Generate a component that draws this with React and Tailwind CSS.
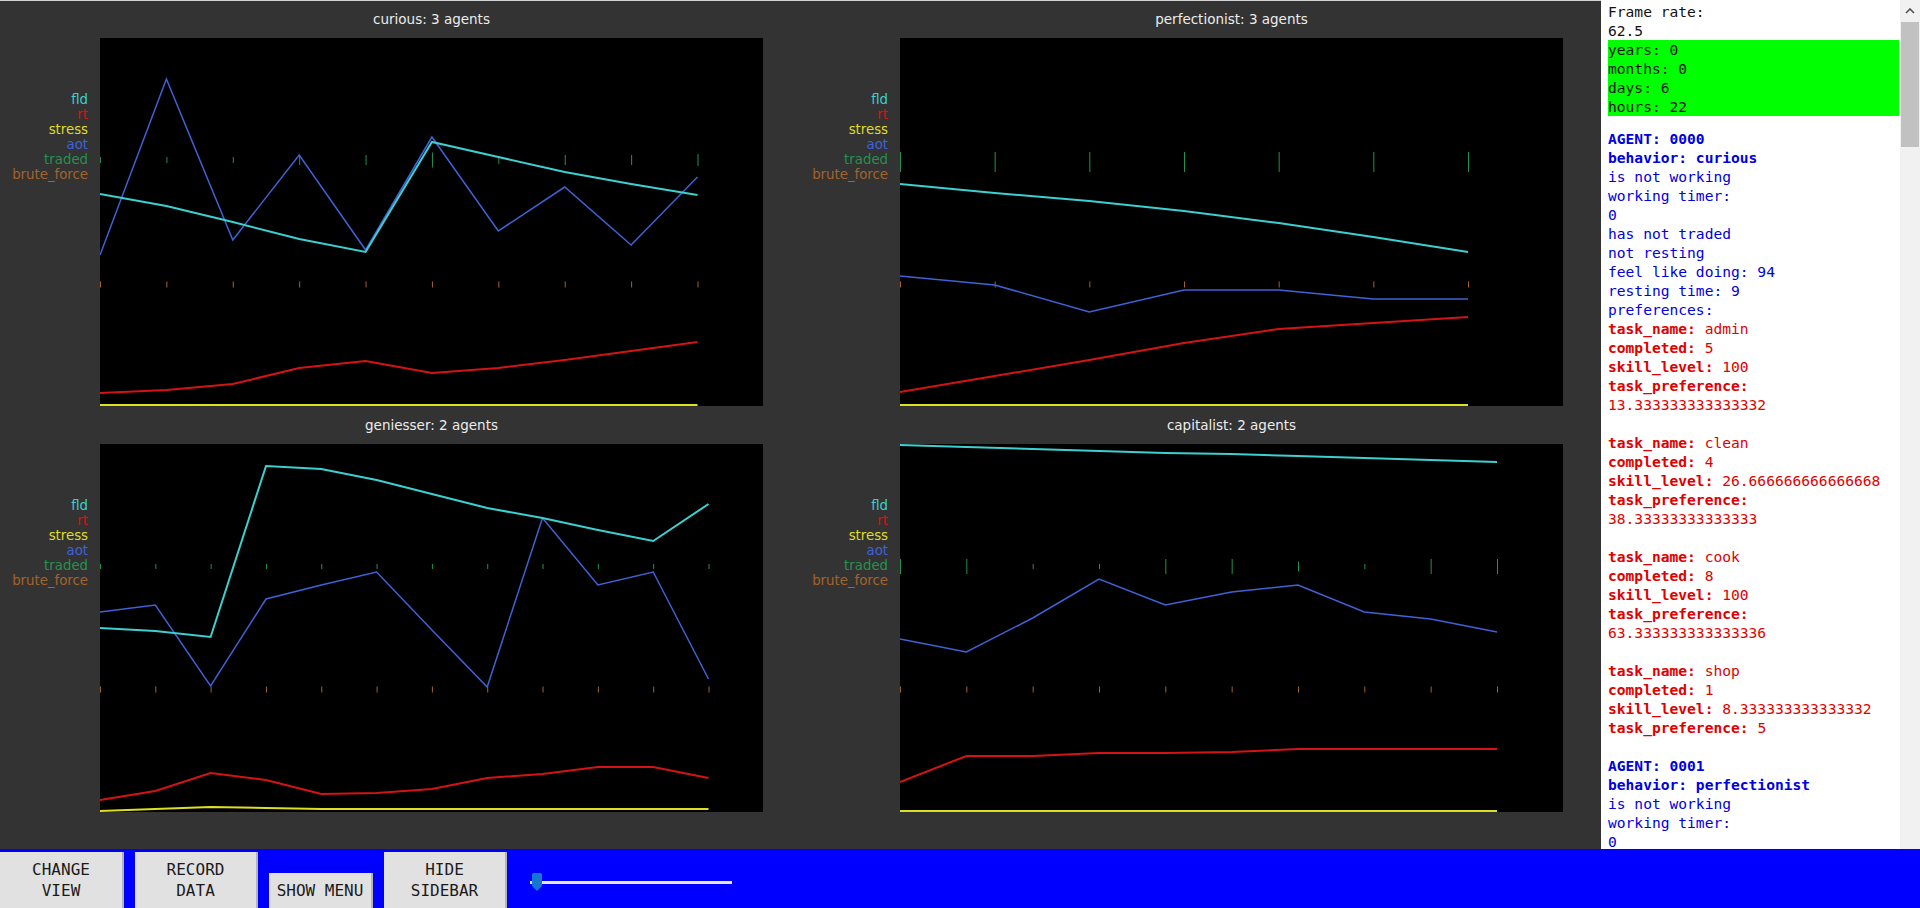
import React from "react";

const C = {
  fld: "#3cd0d0",
  rt: "#d41414",
  stress: "#dede24",
  aot: "#3f62d6",
  traded: "#24914f",
  brute: "#a3632c",
};

const charts = [
  {
    title: "curious: 3 agents",
    last: 597.5,
    fld: [156, 168, 184, 201, 214, 104, 119, 134, 146, 157],
    aot: [217, 41, 202, 117, 212, 99, 193, 149, 207, 139],
    rt: [355, 352, 346, 330, 323, 335, 330, 322, 313, 304],
    stress: [367, 367, 367, 367, 367, 367, 367, 367, 367, 367],
    traded: [6, 6, 6, 10, 10, 15, 8, 10, 10, 12],
    tc: 122,
    bc: 246.5,
  },
  {
    title: "perfectionist: 3 agents",
    last: 568,
    fld: [146, 155, 163, 173, 185, 199, 214],
    aot: [238, 247, 274, 252, 252, 261, 261],
    rt: [354, 338, 322, 305, 291, 285, 279],
    stress: [367, 367, 367, 367, 367, 367, 367],
    traded: [20, 20, 20, 20, 20, 20, 20],
    tc: 124,
    bc: 246.5,
  },
  {
    title: "geniesser: 2 agents",
    last: 608.5,
    fld: [184, 187, 193, 22, 25, 36, 50, 64, 74, 86, 97, 60],
    aot: [168, 161, 242, 155, 141, 128, 186, 243, 74, 141, 128, 235],
    rt: [356, 347, 329, 336, 350, 349, 345, 334, 330, 323, 323, 334],
    stress: [367, 365, 363, 364, 365, 365, 365, 365, 365, 365, 365, 365],
    traded: [5, 5, 5, 5, 5, 5, 5, 5, 5, 5, 5, 5],
    tc: 122.5,
    bc: 245.5,
  },
  {
    title: "capitalist: 2 agents",
    last: 597,
    fld: [1, 3, 5, 7, 9, 10, 12, 14, 16, 18],
    aot: [195, 208, 174, 135, 161, 148, 141, 168, 175, 188],
    rt: [338, 312, 312, 309, 309, 308, 305, 305, 305, 305],
    stress: [367, 367, 367, 367, 367, 367, 367, 367, 367, 367],
    traded: [15, 15, 5, 5, 15, 15, 10, 5, 15, 15],
    tc: 122.5,
    bc: 245.5,
  },
];

function pts(arr, dx) {
  return arr.map((y, i) => `${(i * dx).toFixed(1)},${y}`).join(" ");
}

function Panel({ c }) {
  const n = c.fld.length;
  const dx = c.last / (n - 1);
  const xs = c.fld.map((_, i) => i * dx + 0.5);
  return (
    <div className="flex flex-col">
      <div className="h-[38px] flex items-center pl-[100px]">
        <div className="w-[663px] text-center text-[13.5px] text-[#ececec] font-['DejaVu_Sans',sans-serif]">
          {c.title}
        </div>
      </div>
      <div className="flex">
        <div className="w-[100px] pr-[12px] pt-[54px] text-right text-[13.3px] leading-[15px] font-['DejaVu_Sans',sans-serif]">
          <div className="text-[#3cd0d0]">fld</div>
          <div className="text-[#d41414]">rt</div>
          <div className="text-[#dede24]">stress</div>
          <div className="text-[#3f62d6]">aot</div>
          <div className="text-[#24914f]">traded</div>
          <div className="text-[#a3632c]">brute_force</div>
        </div>
        <svg width="663" height="368" className="block bg-black">
          {xs.map((x, i) => (
            <line
              key={"t" + i}
              x1={x}
              x2={x}
              y1={c.tc - c.traded[i] / 2}
              y2={c.tc + c.traded[i] / 2}
              stroke={C.traded}
              strokeWidth="1"
            />
          ))}
          {xs.map((x, i) => (
            <line
              key={"b" + i}
              x1={x}
              x2={x}
              y1={c.bc - 3}
              y2={c.bc + 3}
              stroke={C.brute}
              strokeWidth="1"
            />
          ))}
          <polyline points={pts(c.stress, dx)} fill="none" stroke={C.stress} strokeWidth="2" />
          <polyline points={pts(c.rt, dx)} fill="none" stroke={C.rt} strokeWidth="2" />
          <polyline points={pts(c.aot, dx)} fill="none" stroke={C.aot} strokeWidth="1.5" />
          <polyline points={pts(c.fld, dx)} fill="none" stroke={C.fld} strokeWidth="2" />
        </svg>
      </div>
    </div>
  );
}

function KV({ k, v }) {
  return (
    <div>
      <span className="font-bold">{k}</span>
      {v !== undefined ? " " + v : ""}
    </div>
  );
}

function Task({ name, completed, skill, pref, prefInline }) {
  return (
    <div className="text-[#e00000]">
      <KV k="task_name:" v={name} />
      <KV k="completed:" v={completed} />
      <KV k="skill_level:" v={skill} />
      {prefInline ? (
        <KV k="task_preference:" v={pref} />
      ) : (
        <>
          <KV k="task_preference:" />
          <div>{pref}</div>
        </>
      )}
      <div>&nbsp;</div>
    </div>
  );
}

function Sidebar() {
  return (
    <div className="flex-1 flex bg-white">
      <div className="w-[299px] overflow-hidden pl-[7px] pt-[2px] text-[14.6px] leading-[19px] font-['DejaVu_Sans_Mono',monospace] whitespace-pre">
        <div className="text-[#111]">Frame rate:</div>
        <div className="text-[#111]">62.5</div>
        <div className="bg-[#00ff00] text-[#111] mr-[1px]">
          <div>years: 0</div>
          <div>months: 0</div>
          <div>days: 6</div>
          <div>hours: 22</div>
        </div>
        <div className="mt-[13px] text-[#0000e0]">
          <div className="font-bold">AGENT: 0000</div>
          <div className="font-bold">behavior: curious</div>
          <div>is not working</div>
          <div>working timer:</div>
          <div>0</div>
          <div>has not traded</div>
          <div>not resting</div>
          <div>feel like doing: 94</div>
          <div>resting time: 9</div>
          <div>preferences:</div>
        </div>
        <Task name="admin" completed="5" skill="100" pref="13.333333333333332" />
        <Task name="clean" completed="4" skill="26.666666666666668" pref="38.33333333333333" />
        <Task name="cook" completed="8" skill="100" pref="63.333333333333336" />
        <Task name="shop" completed="1" skill="8.333333333333332" pref="5" prefInline />
        <div className="text-[#0000e0]">
          <div className="font-bold">AGENT: 0001</div>
          <div className="font-bold">behavior: perfectionist</div>
          <div>is not working</div>
          <div>working timer:</div>
          <div>0</div>
        </div>
      </div>
      <div className="w-[20px] bg-[#f1f1f1] flex flex-col items-center">
        <div className="h-[22px] w-full flex items-center justify-center">
          <svg width="10" height="6" viewBox="0 0 10 6">
            <polyline points="1,5 5,1 9,5" fill="none" stroke="#505050" strokeWidth="1.6" />
          </svg>
        </div>
        <div className="h-[125px] w-[18px] bg-[#c1c1c1]" />
      </div>
    </div>
  );
}

export default function App() {
  return (
    <div className="w-[1920px] h-[908px] overflow-hidden flex flex-col bg-[#333333]">
      <div className="flex h-[849px]">
        <div className="w-[1601px] bg-[#333333] shadow-[inset_0_1px_0_#d2d2d2] grid grid-cols-[800px_800px] grid-rows-[406px_406px] content-start">
          {charts.map((c) => (
            <Panel key={c.title} c={c} />
          ))}
        </div>
        <Sidebar />
      </div>
      <div className="h-[59px] bg-[#0000ff] flex items-end gap-[11px]">
        <button className="w-[124px] h-[56px] shrink-0 bg-[#e1e1e1] border-r-2 border-[#b4b4b4] text-[16px] leading-[21px] text-[#1a1a1a] text-center font-['DejaVu_Sans_Mono',monospace]">
          CHANGE
          <br />
          VIEW
        </button>
        <button className="w-[123px] h-[56px] shrink-0 bg-[#e1e1e1] border-r-2 border-[#b4b4b4] text-[16px] leading-[21px] text-[#1a1a1a] text-center font-['DejaVu_Sans_Mono',monospace]">
          RECORD
          <br />
          DATA
        </button>
        <button className="w-[104px] h-[35px] shrink-0 bg-[#e1e1e1] border-r-2 border-[#b4b4b4] text-[16px] leading-[21px] text-[#1a1a1a] text-center whitespace-nowrap font-['DejaVu_Sans_Mono',monospace]">
          SHOW MENU
        </button>
        <button className="w-[123px] h-[56px] shrink-0 bg-[#e1e1e1] border-r-2 border-[#b4b4b4] text-[16px] leading-[21px] text-[#1a1a1a] text-center font-['DejaVu_Sans_Mono',monospace]">
          HIDE
          <br />
          SIDEBAR
        </button>
        <div className="relative ml-[12px] mb-[17px] w-[202px] h-[18px]">
          <div className="absolute left-0 right-0 top-[8px] h-[3px] bg-[#e6e6e6]" />
          <svg className="absolute left-[2px] top-0" width="10" height="18" viewBox="0 0 10 18">
            <path
              d="M0 1.5 Q0 0 1.5 0 H8.5 Q10 0 10 1.5 V12 Q10 13 9 14 L6 17 Q5 18 4 17 L1 14 Q0 13 0 12 Z"
              fill="#1677d2"
            />
          </svg>
        </div>
      </div>
    </div>
  );
}
